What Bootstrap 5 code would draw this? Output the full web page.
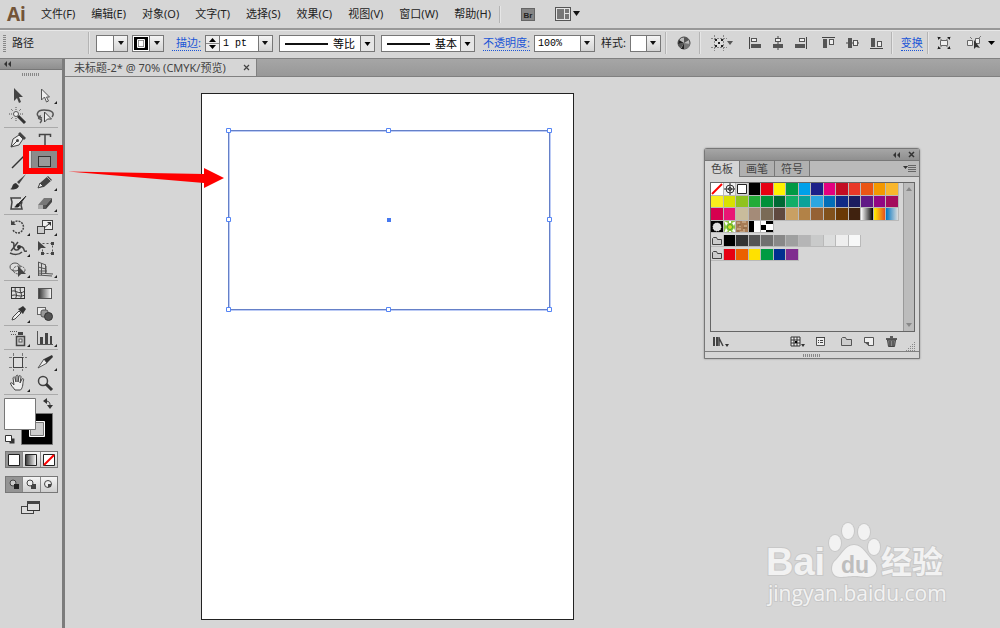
<!DOCTYPE html>
<html lang="zh-CN">
<head>
<meta charset="utf-8">
<meta name="viewport" content="width=device-width, initial-scale=1">
<title>未标题-2</title>
<link href="https://cdn.jsdelivr.net/npm/bootstrap@5.3.0/dist/css/bootstrap.min.css" rel="stylesheet">
<style>
:root{--chrome:#d6d6d6;--ink:#333;--edge:#808080}
body{background:var(--chrome);color:#222;font:11px/16px "Noto Sans","Noto Sans CJK SC",sans-serif;overflow:hidden}
button{background:none;border:0;padding:0;color:inherit;font:inherit}
svg{display:block;flex:none}
.menubar{height:28px;padding:0 6px 0 7px}
.menubar .brand{font:bold 19px/24px "Open Sans",sans-serif;color:#735438;width:34px}
.menus{gap:16px}
.menus a{color:#222;text-decoration:none}
.vline{width:2px;background:#b4b4b4;border-right:1px solid #e6e6e6;flex:none}
.optbar{height:31px;border-top:2px solid #989898;border-bottom:1px solid #808080;box-shadow:inset 0 1px #e8e8e8;padding:0 4px 2px 3px}
.optbar .vline{height:22px}
.optbar>*{flex:none}
.optbar a{color:#1b55d6;text-decoration:none;border-bottom:1px dotted #1b55d6;line-height:14px;white-space:nowrap}
.after6{margin-left:6px}
.grip-v{width:3px;height:17px;background:repeating-linear-gradient(#888 0 1px,transparent 1px 2px)}
.kind{width:76px;margin-left:6px}
.field{height:17px;border:1px solid #777;background:#fff;flex:none}
.drop{width:14px;border-left:1px solid #777;background:linear-gradient(#f4f4f4,#d4d4d4);position:relative}
.drop::after{content:"";display:block;width:0;border:3px solid transparent;border-top:4px solid #111;border-bottom:0;margin:auto}
.field input{border:0;outline:0;background:transparent;padding:0 3px;min-width:0;height:15px;font:10px/15px "Liberation Mono",monospace;color:#000}
.spin{width:14px;border-right:1px solid #777;background:#eee}
.linepick{appearance:none;height:17px;border:1px solid #777;border-radius:0;padding:0 0 0 53px;font:11px/14px "Noto Sans CJK SC",sans-serif;color:#000;flex:none;
 background:linear-gradient(#111,#111) 5px 7px/43px 2px no-repeat,url("data:image/svg+xml,%3Csvg xmlns='http://www.w3.org/2000/svg' width='14' height='15'%3E%3Cpath fill='%23e6e6e6' d='M0 0h14v15H0z'/%3E%3Cpath fill='%23777' d='M0 0h1v15H0z'/%3E%3Cpath d='M4.500 6h6l-3 4z'/%3E%3C/svg%3E") right center no-repeat,#fff}
.toolbox{width:65px;border-right:3px solid #7c7c7c;flex:none}
.strip{height:11px;background:linear-gradient(#a5a5a5,#8f8f8f);border-bottom:1px solid #777;padding-left:3px}
.grip-h{height:3px;width:18px;background:repeating-linear-gradient(90deg,#888 0 1px,transparent 1px 2px)}
.toolbox .grip-h{margin-top:3px;margin-bottom:7px}
.toolset{display:grid;grid-template-columns:27px 27px;grid-auto-rows:21px;padding:1px 0;margin:0 4px;border-bottom:1px solid #aaa}
.toolset button{display:flex;align-items:center;justify-content:center;position:relative}
.toolset button.more::after{content:"";position:absolute;right:1px;bottom:1px;border-left:3px solid transparent;border-bottom:3px solid #222}
.toolset button.picked{background:#8b8b8b;border:1px solid #777}
.marker{position:absolute;left:-9px;top:-6px;width:40px;height:29px;border:6px solid #f00;z-index:3}
.modes{margin:0 4px 0 5px;border:1px solid #777;height:17px}
.modes button{flex:1;display:flex;align-items:center;justify-content:center;background:linear-gradient(#f4f4f4,#cfcfcf)}
.modes button+button{border-left:1px solid #888}
.modes button.picked{background:#949494}
.tabstrip{height:18px;background:linear-gradient(#a6a6a6,#989898);border-bottom:1px solid #808080}
.doctab{background:var(--chrome);height:17px;padding:0 5px 0 9px;border-right:1px solid #808080;color:#444;white-space:nowrap}
.board{position:absolute;left:136px;top:16px;width:373px;height:527px;background:#fff;border:1px solid #222}
.overlay{position:absolute;left:0;top:0}
.swatchpanel{position:absolute;right:80px;top:71px;width:216px;background:var(--chrome);border:1px solid #777;border-radius:3px 3px 0 0;box-shadow:0 0 2px #888}
.panelhead{height:12px;background:linear-gradient(#a6a6a6,#8f8f8f);border-bottom:1px solid #777;padding-right:4px}
.paneltabs{height:16px;background:#bababa}
.paneltabs button{width:35px;height:16px;line-height:14px;color:#444;border-right:1px solid #777;border-bottom:1px solid #777;background:#b0b0b0}
.paneltabs button.picked{background:var(--chrome);border-bottom:0}
.paneltabs .rest{border-bottom:1px solid #777;padding-right:3px}
.well{margin:5px 4px 0 5px;border:1px solid #666;height:150px}
.swgrid{display:grid;grid-template-columns:repeat(15,1fr);width:188px;height:50px;grid-auto-rows:1fr;margin-bottom:2px}
.swgrid.one{height:12px}
.swgrid button{border:1px solid #b9b9b9;border-left:0;border-top:0;display:flex;overflow:hidden}
.scroller{width:11px;background:#bcbcbc;border-left:1px solid #999}
.panelfoot{height:19px;padding:0 4px 0 8px}
.panelend{height:7px;border-top:1px solid #808080}
.wm{position:absolute;right:48px;bottom:18px}
</style>
</head>
<body>
<div class="vh-100 d-flex flex-column">
<header class="menubar d-flex align-items-center flex-shrink-0">
 <span class="brand">Ai</span>
 <nav class="menus d-flex text-nowrap">
  <a href="#">文件(F)</a><a href="#">编辑(E)</a><a href="#">对象(O)</a><a href="#">文字(T)</a><a href="#">选择(S)</a><a href="#">效果(C)</a><a href="#">视图(V)</a><a href="#">窗口(W)</a><a href="#">帮助(H)</a>
 </nav>
 <span class="vline ms-2 me-3" style="height:17px"></span>
 <button class="ms-1" aria-label="Bridge"><svg width="14" height="13"><rect x=".5" y=".5" width="13" height="12" fill="#858585" stroke="#666"/><text x="7" y="10" font-size="8" font-weight="bold" font-family="Liberation Sans,sans-serif" text-anchor="middle" fill="#222">Br</text></svg></button>
 <button class="d-flex align-items-center ms-3 ps-1" aria-label="排列文档"><svg width="25" height="14"><rect x=".5" y=".5" width="15" height="13" fill="#e4e4e4" stroke="#555"/><path d="M2 2h7v10H2zM10 2h4v4h-4zM10 7h4v5h-4z" fill="#777"/><path d="M18 4h7l-3.500 5z" fill="#111"/></svg></button>
</header>

<section class="optbar d-flex align-items-center flex-shrink-0">
 <i class="grip-v"></i><span class="kind">路径</span><i class="vline"></i>
 <button class="field d-flex after6" aria-label="填色"><span style="width:16px"></span><span class="drop h-100 d-flex"></span></button>
 <button class="field d-flex ms-1" aria-label="描边颜色"><svg width="16" height="15"><path d="M1 1h14v13H1z" fill="#000"/><path d="M5.500 4.500h5v6h-5z" fill="#fff" stroke="#999"/><path d="M4.500 3.500h7v8h-7z" fill="none" stroke="#fff"/></svg><span class="drop h-100 d-flex"></span></button>
 <a href="#" class="ms-2 ps-1">描边:</a>
 <div class="field d-flex ms-1" style="width:68px"><button class="spin" aria-label="粗细"><svg width="13" height="15"><path d="M3 6l3.500-4L10 6zM3 9l3.500 4L10 9z"/><path d="M0 7.500h13" stroke="#888"/></svg></button><input class="flex-fill w-50" aria-label="描边粗细" value="1 pt"><button class="drop d-flex" aria-label="选择粗细"></button></div>
 <select class="linepick after6" style="width:96px" aria-label="变量宽度"><option>等比</option></select>
 <select class="linepick after6 me-2" style="width:94px" aria-label="画笔定义"><option>基本</option></select>
 <a href="#">不透明度:</a>
 <div class="field pct d-flex ms-1" style="width:61px"><input class="flex-fill w-50" aria-label="不透明度" value="100%"><button class="drop d-flex" aria-label="选择不透明度"></button></div>
 <span class="after6 me-1 text-nowrap">样式:</span>
 <button class="field d-flex me-1" aria-label="图形样式"><span style="width:15px"></span><span class="drop h-100 d-flex"></span></button>
 <i class="vline me-1"></i>
 <button class="after6" aria-label="重新着色"><svg width="14" height="14"><circle cx="7" cy="7" r="6" fill="#bbb" stroke="#444"/><path d="M7 7V1a6 6 0 015 3zM7 7L1 8a6 6 0 003 4z" fill="#555"/><path d="M7 7l6 1a6 6 0 01-6 5z" fill="#777"/><path d="M7 7L2 4 1 8zM7 7v6H4z" fill="#222"/></svg></button>
 <i class="vline ms-2 me-1"></i>
 <button class="after6 me-3" aria-label="对齐"><svg width="22" height="16"><path d="M3.500 0v16M12.500 0v16M0 3.500h16M0 12.500h16" stroke="#888" stroke-dasharray="2 1"/><path d="M4 4h8v8H4z" fill="#ddd"/><path d="M4 4h2v2H4zM10 4h2v2h-2zM7 7h2v2H7zM4 10h2v2H4zM10 10h2v2h-2z" fill="#222"/><path d="M16 6h6l-3 4z" fill="#555"/></svg></button>
 <div class="d-flex" style="gap:11px">
 <button aria-label="左对齐"><svg width="12" height="14"><path d="M.5 1v12" stroke="#444"/><rect x="2.500" y="2.500" width="5" height="3" fill="#eee" stroke="#555"/><path d="M2 8h10v4H2z" fill="#555"/></svg></button>
 <button aria-label="水平居中"><svg width="12" height="14"><path d="M6 0v14" stroke="#444"/><rect x="3.500" y="2.500" width="5" height="3" fill="#eee" stroke="#555"/><path d="M1 8h10v4H1z" fill="#555"/></svg></button>
 <button aria-label="右对齐"><svg width="12" height="14"><path d="M11.500 1v12" stroke="#444"/><rect x="4.500" y="2.500" width="5" height="3" fill="#eee" stroke="#555"/><path d="M0 8h10v4H0z" fill="#555"/></svg></button>
 <button class="ms-1" aria-label="顶对齐"><svg width="13" height="14"><path d="M0 1.500h13" stroke="#444"/><rect x="7.500" y="3.500" width="4" height="5" fill="#eee" stroke="#555"/><path d="M1 3h4v9H1z" fill="#555"/></svg></button>
 <button aria-label="垂直居中"><svg width="13" height="14"><path d="M0 7h13" stroke="#444"/><rect x="7.500" y="4.500" width="4" height="5" fill="#eee" stroke="#555"/><path d="M2 2h4v10H2z" fill="#555"/></svg></button>
 <button aria-label="底对齐"><svg width="13" height="14"><path d="M0 12.500h13" stroke="#444"/><rect x="7.500" y="5.500" width="4" height="5" fill="#eee" stroke="#555"/><path d="M1 2h4v9H1z" fill="#555"/></svg></button>
 </div>
 <i class="vline mx-2"></i><a href="#">变换</a><i class="vline ms-1 me-2"></i>
 <button aria-label="隔离"><svg width="14" height="14"><path d="M3.500 4.500h7v5h-7z" fill="#eee" stroke="#666"/><path d="M0 1l5 3M14 1L9 4M0 13l5-3M14 13l-5-3" stroke="#888"/><path d="M1 1h3L1 4zM13 1h-3l3 3zM1 13h3l-3-3zM13 13h-3l3-3z" fill="#222"/></svg></button>
 <button class="ms-3" aria-label="选择类似对象"><svg width="28" height="14"><path d="M.5 4.500h5v5h-5zM8.500 2.500h4v5h-4z" fill="#eee" stroke="#666"/><path d="M7 4v9l2-2 4 1z" fill="#333"/><path d="M12 2l2-2M5 3L3 1" stroke="#777"/><path d="M21 5h7l-3.500 4z"/></svg></button>
</section>

<main class="d-flex flex-fill">
<aside class="toolbox">
 <div class="strip"><svg width="9" height="9"><path d="M4 2v6L1 5zM8 2v6L5 5z" fill="#333"/></svg></div>
 <div class="grip-h mx-auto"></div>
 <div class="toolset">
  <button aria-label="选择"><svg width="18" height="18"><path d="M5 2v13l3-3 2 5 2-1-2-5h4z" fill="#444"/></svg></button>
  <button class="more" aria-label="直接选择"><svg width="18" height="18"><path d="M5.500 3v11l3-3 2 5 2-1-2-4h3z" fill="#eee" stroke="#555"/></svg></button>
  <button aria-label="魔棒"><svg width="18" height="18"><circle cx="7" cy="7" r="2.500" fill="#eee" stroke="#555"/><path d="M7 0v3M7 11v3M0 7h3M11 7h3M2 2l2 2M12 2l-2 2M2 12l2-2" stroke="#555" stroke-dasharray="1 1"/><path d="M9 9l7 7" stroke="#333" stroke-width="3"/></svg></button>
  <button aria-label="套索"><svg width="18" height="18"><path d="M6 11C-1 10 0 3 8 3s11 3 8 7" fill="none" stroke="#555" stroke-width="1.500"/><path d="M5 9c-3 0-3 3-1 3s2 2 0 4" fill="none" stroke="#555" stroke-width="1.500"/><path d="M8.500 5v10l3-3h4z" fill="#eee" stroke="#444"/></svg></button>
 </div>
 <div class="toolset">
  <button aria-label="钢笔"><svg width="18" height="18"><path d="M2 16L4 8l6-4 4 4-4 6z" fill="#eee" stroke="#444"/><path d="M11 1l6 6-2 2-6-6z" fill="#444"/><path d="M2 16l6-6" stroke="#444"/><circle cx="8.500" cy="9.500" r="1.500" fill="#444"/></svg></button>
  <button aria-label="文字"><svg width="18" height="18"><path d="M3.500 6V3.500h11V6M9 3v12M6.500 15.500h5" fill="none" stroke="#444" stroke-width="1.500"/></svg></button>
  <button aria-label="直线段"><svg width="18" height="18"><path d="M3 16L16 3" stroke="#333" stroke-width="1.500"/></svg></button>
  <button class="picked" aria-label="矩形"><svg width="18" height="18"><rect x="2.500" y="4.500" width="12" height="10" fill="#999" stroke="#333"/></svg><i class="marker"></i></button>
  <button aria-label="画笔"><svg width="18" height="18"><path d="M17 1L8 9l2 2z" fill="#444"/><path d="M1 16c3 0 1-5 6-6l3 3c-2 4-6 4-9 3z" fill="#333"/></svg></button>
  <button class="more" aria-label="铅笔"><svg width="18" height="18"><path d="M2 15l2-5 8-7 4 4-8 7z" fill="#444"/><path d="M2 15l2-5 3 3z" fill="#eee" stroke="#444"/><path d="M11 4l4 4" stroke="#aaa"/></svg></button>
  <button aria-label="斑点画笔"><svg width="18" height="18"><path d="M12 4H2l1 4-1 7h11l-1-4 1-3" fill="#ddd" stroke="#444" stroke-width="1.500"/><path d="M17 2l-7 7 1 1z" fill="#333" stroke="#333"/><path d="M5 13c2 0 2-4 5-4l1 2c-1 3-4 3-6 2z" fill="#222"/></svg></button>
  <button class="more" aria-label="橡皮擦"><svg width="18" height="18"><path d="M2 11l6-7h8l-6 7z" fill="#777"/><path d="M2 11h8v4H2z" fill="#555"/><path d="M10 11l6-7v4l-6 7z" fill="#444"/><path d="M2 11h5v4H2z" fill="#aaa"/></svg></button>
 </div>
 <div class="toolset">
  <button class="more" aria-label="旋转"><svg width="18" height="18"><path d="M4 5a6 6 0 115 10 6 6 0 01-5-3" fill="none" stroke="#444" stroke-width="1.500" stroke-dasharray="2 1"/><path d="M2 2v5h5z" fill="#444"/></svg></button>
  <button class="more" aria-label="比例缩放"><svg width="18" height="18"><rect x="6.500" y="2.500" width="10" height="9" fill="#eee" stroke="#444"/><rect x="1.500" y="8.500" width="7" height="7" fill="#ccc" stroke="#444"/><path d="M8 10l5-4" stroke="#333"/><path d="M15 4v4l-4-4z" fill="#333"/></svg></button>
  <button class="more" aria-label="宽度"><svg width="18" height="18"><path d="M2 3c6 0 0 7 5 8s2-5 6-3 0 5 5 4M1 14c4 2 9 2 12-1M2 12l7-9" fill="none" stroke="#444" stroke-width="1.500"/><circle cx="10" cy="8" r="2" fill="#333"/></svg></button>
  <button aria-label="自由变换"><svg width="18" height="18"><rect x="6.500" y="4.500" width="10" height="10" fill="none" stroke="#555" stroke-dasharray="2 2"/><path d="M2 2v10l3-3h5z" fill="#444"/><path d="M15 3h3v3h-3zM5 13h3v3H5zM15 13h3v3h-3z" fill="#444"/></svg></button>
  <button class="more" aria-label="形状生成器"><svg width="18" height="18"><ellipse cx="6" cy="7" rx="5" ry="4" fill="#ddd" stroke="#555"/><ellipse cx="10" cy="10" rx="6" ry="4" fill="none" stroke="#555" stroke-dasharray="2 1"/><path d="M9 6v11l3-3h5z" fill="#444"/></svg></button>
  <button class="more" aria-label="透视网格"><svg width="18" height="18"><path d="M2.500 2v14M5.500 3v12M9.500 5v9M2 2l8 3M2 7l8 2M2 11h9M2 15l14 1M2 13l15 1M10 6v7" fill="none" stroke="#555"/></svg></button>
 </div>
 <div class="toolset">
  <button aria-label="网格"><svg width="18" height="18"><rect x="2.500" y="3.500" width="13" height="11" fill="#ddd" stroke="#333"/><path d="M2 8c4-4 7 4 14-1M2 12c5-3 7 2 14-1M7 3c-3 4 3 7-1 12M12 3c-3 4 3 7-1 12" fill="none" stroke="#333"/></svg></button>
  <button aria-label="渐变"><svg width="18" height="18"><defs><linearGradient id="fade"><stop stop-color="#333"/><stop offset="1" stop-color="#fff"/></linearGradient></defs><rect x="2.500" y="4.500" width="13" height="10" fill="url(#fade)" stroke="#555"/></svg></button>
  <button class="more" aria-label="吸管"><svg width="18" height="18"><path d="M3 15l1-3 6-6 2 2-6 6z" fill="#eee" stroke="#444"/><path d="M9 4l5 5 1-2 2-3-3-3-3 2z" fill="#333"/></svg></button>
  <button aria-label="混合"><svg width="18" height="18"><rect x="1.500" y="2.500" width="8" height="7" fill="#eee" stroke="#666"/><rect x="5" y="5" width="7" height="7" rx="2" fill="#999" stroke="#555"/><circle cx="12.500" cy="11.500" r="4" fill="#555" stroke="#333"/></svg></button>
 </div>
 <div class="toolset">
  <button class="more" aria-label="符号喷枪"><svg width="18" height="18"><rect x="7.500" y="7.500" width="8" height="9" fill="#ccc" stroke="#444" stroke-width="1.500"/><path d="M9 3h5v3H9z" fill="#444"/><rect x="10" y="10" width="3" height="3" fill="#eee" stroke="#555"/><path d="M1 2.500h7M2 5.500h6" stroke="#555" stroke-dasharray="1 1"/></svg></button>
  <button class="more" aria-label="柱形图"><svg width="18" height="18"><path d="M1.500 2v13.500H17" fill="none" stroke="#555"/><path d="M4 8h3v7H4zM9 4h3v11H9zM14 7h2v8h-2z" fill="#444"/></svg></button>
 </div>
 <div class="toolset">
  <button aria-label="画板"><svg width="18" height="18"><path d="M4.500 0v18M13.500 0v18M0 4.500h18M0 14.500h18" stroke="#777" stroke-dasharray="3 1"/><rect x="4.500" y="4.500" width="9" height="10" fill="#ddd" stroke="#444"/></svg></button>
  <button class="more" aria-label="切片"><svg width="18" height="18"><path d="M2 15l6-9 3 4z" fill="#eee" stroke="#555"/><path d="M8 6l8-4 1 2-6 6z" fill="#333"/></svg></button>
  <button class="more" aria-label="抓手"><svg width="18" height="18"><path d="M6 16c-2-3-4-4-4.500-7 2-1 2 1 3.500 2L4 4c1-2 2-1 2 0l1 4V2c1-1 2-1 2 0v6l1-6c1-1 2 0 2 1l-1 6 2-4c1-1 2 0 1.500 1-1 3 0 7-3 10z" fill="#eee" stroke="#444"/></svg></button>
  <button aria-label="缩放"><svg width="18" height="18"><circle cx="7" cy="7" r="4.500" fill="#ddd" stroke="#444" stroke-width="1.500"/><path d="M10 10l6 6" stroke="#333" stroke-width="3"/></svg></button>
 </div>
 <button class="d-block" style="margin-top:3px" aria-label="填色和描边"><svg width="60" height="49">
  <path d="M21.500 15.500h31v31h-31z" fill="#000" stroke="#777"/><path d="M29.500 23.500h15v15h-15z" fill="#d6d6d6" stroke="#fff"/><path d="M30.500 24.500h13v13h-13z" fill="#ccc" stroke="#777"/>
  <path d="M4.500.5h31v31h-31z" fill="#fff" stroke="#777"/><path d="M45 3c5 0 5 2 5 6" fill="none" stroke="#333"/><path d="M43 3l4-3v6zM50 11l-3-4h6z" fill="#333"/>
  <path d="M9.500 40.500h5v5h-5z" fill="#333"/><path d="M5.500 37.500h6v6h-6z" fill="#fff" stroke="#333"/></svg></button>
 <div class="modes d-flex mt-1 mb-2"><button class="picked" aria-label="颜色"><svg width="12" height="12"><path d="M.5.5h11v11H.5z" fill="#fff" stroke="#222"/></svg></button><button aria-label="渐变填色"><svg width="12" height="12"><path d="M.5.5h11v11H.5z" fill="url(#fade)" stroke="#222"/></svg></button><button aria-label="无"><svg width="12" height="12"><path d="M.5.5h11v11H.5z" fill="#fff" stroke="#222"/><path d="M1 11L11 1" stroke="#f00" stroke-width="2"/></svg></button></div>
 <div class="modes d-flex mb-2"><button class="picked" aria-label="正常绘图"><svg width="11" height="11"><circle cx="4" cy="4" r="3" fill="#ccc" stroke="#444"/><path d="M5 5h5v5H5z" fill="#222"/></svg></button><button aria-label="背面绘图"><svg width="11" height="11"><path d="M5 5h5v5H5z" fill="#444"/><circle cx="4" cy="4" r="3" fill="#eee" stroke="#444"/></svg></button><button aria-label="内部绘图"><svg width="11" height="11"><circle cx="5" cy="5" r="3.500" fill="#eee" stroke="#444"/><path d="M5 5h3v3H5z" fill="#444"/></svg></button></div>
 <button class="d-block mx-auto" aria-label="屏幕模式"><svg width="20" height="14"><rect x=".5" y="5.500" width="12" height="7" fill="#ddd" stroke="#444"/><rect x="6.500" y="1.500" width="12" height="8" fill="#ddd" stroke="#333"/><path d="M6 0h13v3H6z" fill="#444"/></svg></button>
</aside>

<section class="flex-fill d-flex flex-column">
 <div class="tabstrip d-flex"><div class="doctab d-flex align-items-center"><span>未标题-2* @ 70% (CMYK/预览)</span><button class="ps-3" aria-label="关闭"><svg width="9" height="9"><path d="M2 2l5 5M7 2L2 7" stroke="#444" stroke-width="1.200"/></svg></button></div></div>
 <div class="flex-fill position-relative overflow-hidden">
  <div class="board"></div>
  <svg class="overlay" width="510" height="540">
   <path d="M164 54h321v179H164z" fill="none" stroke="#bccbf5" stroke-width="2"/><path d="M163.500 53.500h321v179h-321z" fill="none" stroke="#6580c8"/>
   <g fill="#fff" stroke="#5585f5"><path d="M161.500 51.500h4v4h-4zM321.500 51.500h4v4h-4zM482.500 51.500h4v4h-4zM161.500 140.500h4v4h-4zM482.500 140.500h4v4h-4zM161.500 230.500h4v4h-4zM321.500 230.500h4v4h-4zM482.500 230.500h4v4h-4z"/></g>
   <path d="M322 141h4v4h-4z" fill="#4679f0"/>
   <path d="M3 94.500L139 97v-6l20 10-20 10v-5L80 101z" fill="#f00"/>
  </svg>

  <section class="swatchpanel">
   <div class="panelhead d-flex justify-content-end align-items-center gap-2"><svg width="8" height="8"><path d="M4 1v6L1 4zM8 1v6L5 4z" fill="#333"/></svg><button aria-label="关闭面板"><svg width="7" height="7"><path d="M1 1l5 5M6 1L1 6" stroke="#333" stroke-width="1.500"/></svg></button></div>
   <div class="paneltabs d-flex"><button class="picked">色板</button><button>画笔</button><button>符号</button><div class="rest flex-fill d-flex justify-content-end align-items-center"><svg width="13" height="8"><path d="M0 1h5L2.500 4z" fill="#333"/><path d="M5 .5h8M5 2.500h8M5 4.500h8M5 6.500h8" stroke="#666"/></svg></div></div>
   <div class="well d-flex justify-content-between"><div id="swatches"></div>
    <div class="scroller d-flex flex-column justify-content-between align-items-center py-1"><svg width="6" height="5"><path d="M0 4h6L3 0z" fill="#888"/></svg><svg width="6" height="5"><path d="M0 1h6L3 5z" fill="#888"/></svg></div></div>
   <div class="panelfoot d-flex align-items-center">
    <button aria-label="色板库"><svg width="16" height="12"><path d="M1 1v9M4 1v9" stroke="#444" stroke-width="2"/><path d="M6 2l4 8M6 10V1" stroke="#444" stroke-width="1.500"/><path d="M12 8h4l-2 3z" fill="#333"/></svg></button>
    <div class="ms-auto d-flex me-2" style="gap:11px">
     <button aria-label="显示色板"><svg width="15" height="12"><path d="M1 1h9v9H1z" fill="#eee" stroke="#333"/><path d="M4 1v9M7 1v9M1 4h9M1 7h9" stroke="#333"/><path d="M5 5h2v2H5z"/><path d="M11 8h4l-2 3z" fill="#333"/></svg></button>
     <button aria-label="色板选项"><svg width="10" height="11"><path d="M.5 1.500h8v8h-8z" fill="#eee" stroke="#555"/><path d="M0 1.500h9M2 4.500h1M4 4.500h3M2 6.500h1M4 6.500h3" stroke="#444"/></svg></button>
     <button class="ms-1" aria-label="新建颜色组"><svg width="12" height="11"><path d="M.5 2.500v7h10v-6h-5l-1-2h-3z" fill="#ccc" stroke="#555"/></svg></button>
     <button aria-label="新建色板"><svg width="11" height="11"><path d="M.5 1.500h9v8h-5v-3h-4z" fill="#eee" stroke="#555"/><path d="M0 6h5v4z" fill="#555"/></svg></button>
     <button aria-label="删除色板"><svg width="11" height="11"><path d="M0 3h11M4 1h3" stroke="#333" stroke-width="1.500"/><path d="M1.500 4h8l-1 6.500h-6z" fill="#888" stroke="#444"/><path d="M4 5v5M7 5v5" stroke="#333"/></svg></button>
    </div>
    <svg class="align-self-end" width="10" height="10"><path d="M1 9.500h9M3 7.500h7M5 5.500h5M7 3.500h3M9 1.500h1" stroke="#888" stroke-dasharray="1 1"/></svg>
   </div>
   <div class="panelend d-flex align-items-center"><i class="grip-h mx-auto"></i></div>
  </section>

  <svg class="wm" width="186" height="92" fill="#f2f2f2" stroke="#c8c8c8" stroke-width="2" paint-order="stroke">
   <g><ellipse cx="69" cy="25" rx="6" ry="8"/><ellipse cx="82" cy="13" rx="6" ry="8"/><ellipse cx="98" cy="14" rx="6" ry="8"/><ellipse cx="108" cy="29" rx="6" ry="8"/>
   <path d="M88 27c9 0 13 11 20 17 5 6 2 15-6 15-6 0-9-1-14-1s-8 1-14 1c-8 0-10-9-6-15 7-6 11-17 20-17z"/></g>
   <text x="0" y="57" font-family="Liberation Sans,sans-serif" font-weight="bold" font-size="38">Bai</text>
   <text x="75" y="55" font-family="Liberation Sans,sans-serif" font-weight="bold" font-size="23" fill="#bebebe" stroke="none">du</text>
   <text x="115" y="55" font-family="Noto Sans CJK SC,sans-serif" font-weight="bold" font-size="31">经验</text>
   <text x="2" y="83" font-family="Open Sans,sans-serif" font-size="21">jingyan.baidu.com</text>
  </svg>
 </div>
</section>
</main>
</div>
<script src="https://cdn.jsdelivr.net/npm/bootstrap@5.3.0/dist/js/bootstrap.bundle.min.js"></script>
<script>
const svg = s => `<svg width="12" height="12">${s}</svg>`;
const none = svg('<path d="M0 0h12v12H0z" fill="#fff"/><path d="M1 11L11 1" stroke="#f00" stroke-width="2"/>');
const reg = svg('<path d="M0 0h12v12H0z" fill="#eee"/><circle cx="6" cy="6" r="4" fill="none" stroke="#333"/><circle cx="6" cy="6" r="1.500" fill="none" stroke="#333"/><path d="M6 0v12M0 6h12" stroke="#333"/>');
const white = svg('<path d="M1.500 1.500h9v9h-9z" fill="#fff" stroke="#222"/>');
const dot = svg('<path d="M0 0h12v12H0z"/><circle cx="6" cy="6" r="4" fill="#ddd" stroke="#fff" stroke-dasharray="1 1"/>');
const leaf = svg('<path d="M0 0h12v12H0z" fill="#8cc63f"/><path d="M0 0l4 2-2 3zM12 0L8 2l2 3zM0 12l4-2-2-3zM12 12l-4-2 2-3zM5 0h2v2H5zM5 10h2v2H5z" fill="#fff"/><circle cx="6" cy="6" r="2.500" fill="#d6dd25" stroke="#4ba52b"/>');
const bark = svg('<path d="M0 0h12v12H0z" fill="#a87c56"/><path d="M1 2h3M6 1h4M3 5h2M8 5h3M1 8h4M7 9h2M4 11h5" stroke="#dcc4a4"/><path d="M2 4h3M7 7h4M1 10h2" stroke="#85603f"/>');
const bars = svg('<path d="M0 0h12v12H0z" fill="#fff"/><path d="M0 0h5v12H0z"/>');
const check = svg('<path d="M0 0h12v12H0z" fill="#fff"/><path d="M0 4h5v5H0zM5 0h7v3H5zM5 9h7v3H5z"/>');
const folder = svg('<path d="M1.500 3.500v6h9v-5h-4l-1-2h-3z" fill="#ccc" stroke="#444"/>');
const groups = [
 [none,reg,white,'#000','#e60012','#fff100','#009944','#00a0e9','#1d2088','#e4007f','#c30d23','#e83828','#ea5514','#f39800','#f8b62d',
  '#f9ed1e','#d9e000','#8fc31f','#22ac38','#009139','#006934','#13ae67','#0ba29a','#2ca6e0','#036eb8','#102b87','#1b1c60','#601986','#920783','#a40b5d',
  '#d7004f','#e91674','#c9bc9c','#a48b78','#7a6a56','#60493f','#c9a063','#b28247','#956134','#81511c','#6a3906','#40220f','linear-gradient(90deg,#fff,#000)','linear-gradient(90deg,#fff000,#e85020)','linear-gradient(90deg,#0075c2,#ddd)',
  dot,leaf,bark,bars,check],
 [folder,'#000','#333','#555','#707070','#888','#9fa0a0','#b5b5b6','#c9caca','#dcdddd','#eee','#f7f8f8'],
 [folder,'#e60012','#eb6100','#ffe100','#009b42','#00308f','#7f2d8f']
];
document.getElementById('swatches').innerHTML = groups.map((g, i) =>
 `<div class="swgrid${i ? ' one' : ''}">` + g.map(c => c[0] === '<'
  ? `<button aria-label="色板">${c}</button>`
  : `<button aria-label="${c}" style="background:${c}"></button>`).join('') + '</div>').join('');
</script>
</body>
</html>
